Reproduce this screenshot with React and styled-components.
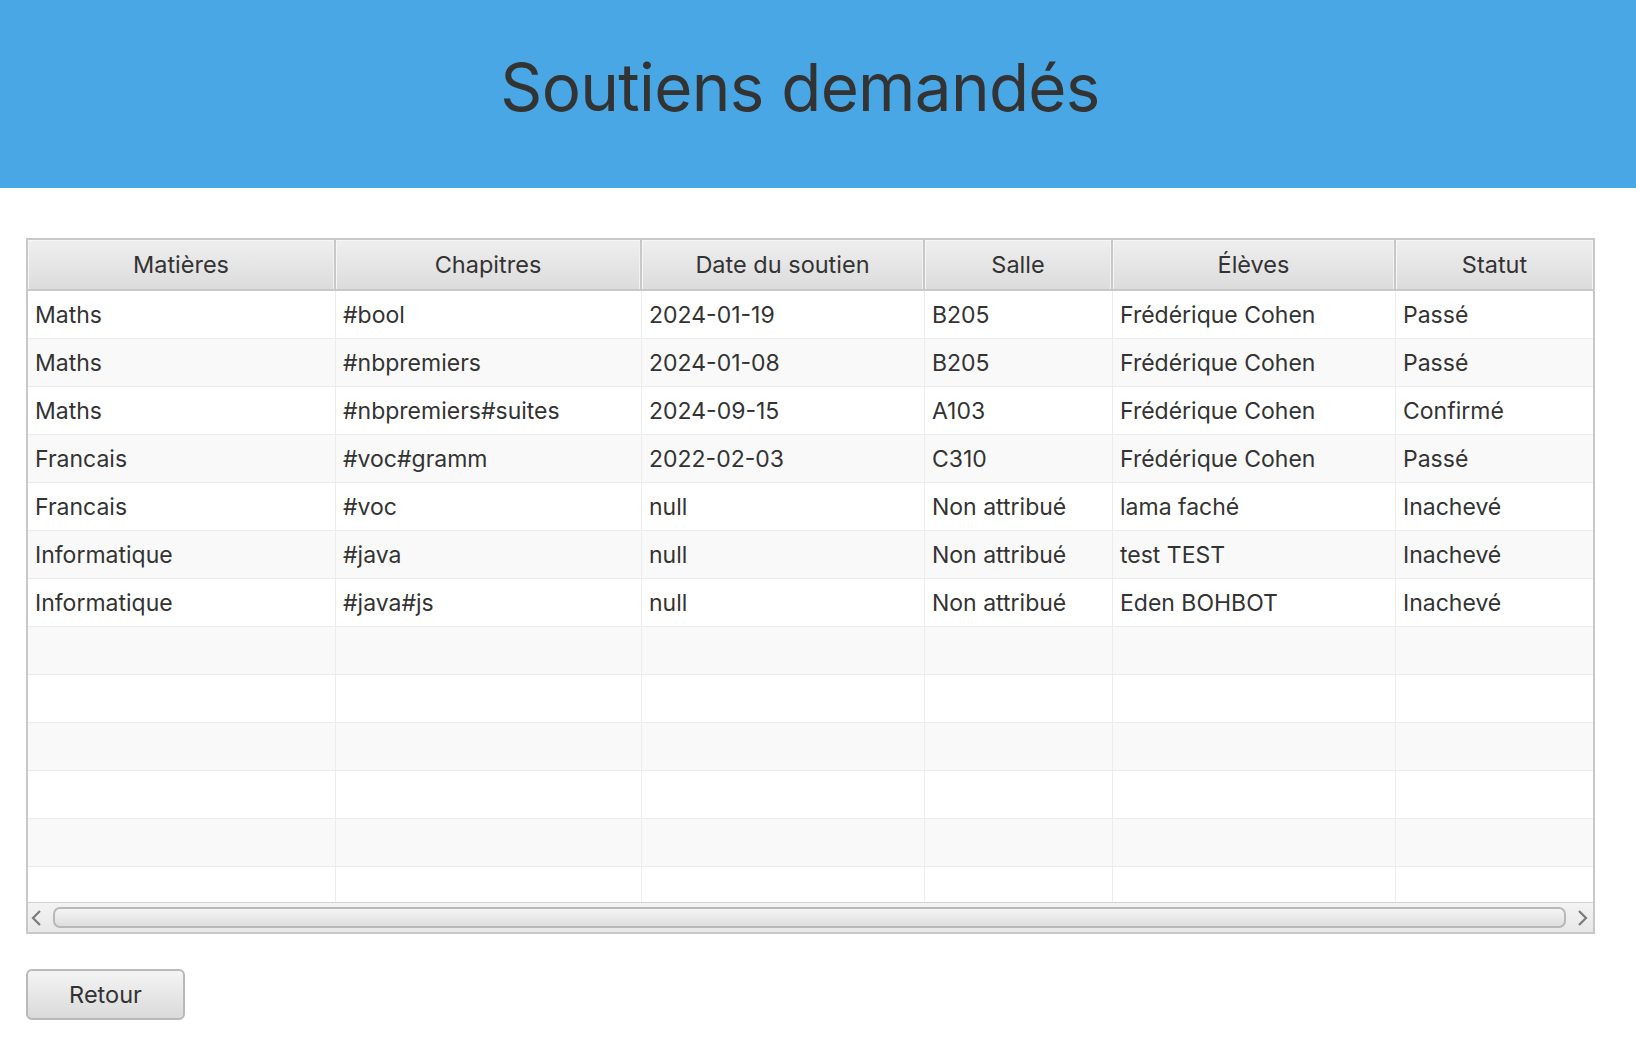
import styled, { createGlobalStyle } from 'styled-components';

const GlobalStyle = createGlobalStyle`
  html, body {
    margin: 0;
    padding: 0;
    background: #ffffff;
    font-family: Inter, "Noto Sans", "Liberation Sans", sans-serif;
    color: #333333;
  }
`;

const COLUMNS = ['Matières', 'Chapitres', 'Date du soutien', 'Salle', 'Élèves', 'Statut'];

const rows = [
  ['Maths', '#bool', '2024-01-19', 'B205', 'Frédérique Cohen', 'Passé'],
  ['Maths', '#nbpremiers', '2024-01-08', 'B205', 'Frédérique Cohen', 'Passé'],
  ['Maths', '#nbpremiers#suites', '2024-09-15', 'A103', 'Frédérique Cohen', 'Confirmé'],
  ['Francais', '#voc#gramm', '2022-02-03', 'C310', 'Frédérique Cohen', 'Passé'],
  ['Francais', '#voc', 'null', 'Non attribué', 'lama faché', 'Inachevé'],
  ['Informatique', '#java', 'null', 'Non attribué', 'test TEST', 'Inachevé'],
  ['Informatique', '#java#js', 'null', 'Non attribué', 'Eden BOHBOT', 'Inachevé'],
];

const EMPTY_ROWS = 6;
const GRID = '308px 306px 283px 188px 283px 1fr';

const Page = styled.div`
  width: 1636px;
  min-height: 1058px;
`;

const Header = styled.header`
  height: 188px;
  background: #48a7e4;
  display: flex;
  align-items: center;
  justify-content: center;
`;

const Title = styled.h1`
  margin: 0 36px 0 0;
  font-family: Inter, "Noto Sans", sans-serif;
  font-weight: 400;
  font-size: 65.5px;
  letter-spacing: -0.7px;
  color: #333333;
  padding-bottom: 13px;
`;

const Content = styled.main`
  padding: 50px 41px 0 26px;
  display: flex;
  flex-direction: column;
  gap: 35px;
  align-items: flex-start;
`;

const Table = styled.div`
  width: 100%;
  border: 2px solid #c8c8c8;
  box-sizing: border-box;
  display: flex;
  flex-direction: column;
  background: #ffffff;
`;

const HeadRow = styled.div`
  display: grid;
  grid-template-columns: ${GRID};
  height: 49px;
  border-bottom: 2px solid #c8c8c8;
  background: linear-gradient(#efefef, #dcdcdc);
`;

const HeadCell = styled.div`
  display: flex;
  align-items: center;
  justify-content: center;
  font-size: 23.5px;
  color: #333333;
  box-shadow: inset 1px 1px 0 #f6f6f6, inset -1px 0 0 #f2f2f2;
  border-right: 2px solid #c8c8c8;
  &:last-child {
    border-right: none;
  }
`;

const Body = styled.div`
  height: 611px;
  overflow: hidden;
`;

const Row = styled.div`
  display: grid;
  grid-template-columns: ${GRID};
  height: 48px;
  box-sizing: border-box;
  border-bottom: 1px solid #ececec;
  background: ${(p) => (p.$odd ? '#f9f9f9' : '#ffffff')};
`;

const Cell = styled.div`
  display: flex;
  align-items: center;
  padding-left: 7px;
  font-size: 23px;
  color: #333333;
  white-space: nowrap;
  overflow: hidden;
  border-right: 1px solid #ececec;
  &:last-child {
    border-right: none;
  }
`;

const ScrollBar = styled.div`
  height: 30px;
  display: flex;
  align-items: center;
  gap: 10px;
  padding: 0 3px 0 1px;
  border-top: 1px solid #d2d2d2;
  box-sizing: border-box;
  background: linear-gradient(#f3f3f3, #e8e8e8);
`;

const Arrow = styled.svg`
  flex: none;
  width: 14px;
  height: 20px;
`;

const Thumb = styled.div`
  flex: 1;
  height: 21px;
  border: 2px solid #b8b8b8;
  border-radius: 7px;
  box-sizing: border-box;
  background: linear-gradient(#f4f4f4, #dedede);
`;

const Button = styled.button`
  width: 159px;
  height: 51px;
  font-family: Inter, "Noto Sans", sans-serif;
  font-size: 23.5px;
  color: #333333;
  border: 2px solid #b9b9b9;
  border-radius: 6px;
  background: linear-gradient(#f4f4f4, #dadada);
  cursor: pointer;
`;

function Chevron({ dir }) {
  const d = dir === 'left' ? 'M11 3 L4 10 L11 17' : 'M3 3 L10 10 L3 17';
  return (
    <Arrow viewBox="0 0 14 20">
      <path d={d} fill="none" stroke="#7a7a7a" strokeWidth="2.2" />
    </Arrow>
  );
}

export default function App() {
  const allRows = [...rows, ...Array.from({ length: EMPTY_ROWS }, () => COLUMNS.map(() => ''))];
  return (
    <>
      <GlobalStyle />
      <Page>
        <Header>
          <Title>Soutiens demandés</Title>
        </Header>
        <Content>
          <Table>
            <HeadRow>
              {COLUMNS.map((c) => (
                <HeadCell key={c}>{c}</HeadCell>
              ))}
            </HeadRow>
            <Body>
              {allRows.map((r, i) => (
                <Row key={i} $odd={i % 2 === 1}>
                  {r.map((v, j) => (
                    <Cell key={j}>{v}</Cell>
                  ))}
                </Row>
              ))}
            </Body>
            <ScrollBar>
              <Chevron dir="left" />
              <Thumb />
              <Chevron dir="right" />
            </ScrollBar>
          </Table>
          <Button>Retour</Button>
        </Content>
      </Page>
    </>
  );
}
